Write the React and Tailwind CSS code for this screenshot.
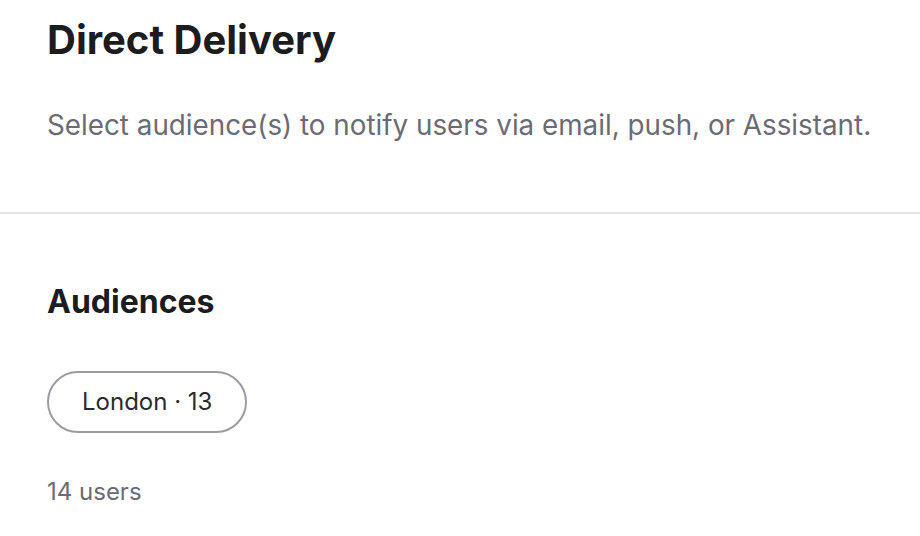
export default function App() {
  return (
    <div className="w-[920px] h-[536px] bg-white overflow-hidden" style={{ fontFamily: "Inter, 'Noto Sans', sans-serif" }}>
      <div className="pl-[47px] pt-[14px]">
        <h1 className="text-[40px] leading-[52px] font-bold text-[#1c1c1f]">Direct Delivery</h1>
        <p className="mt-[41px] whitespace-nowrap text-[27.8px] leading-[36px] text-[#6b6b74]">Select audience(s) to notify users via email, push, or Assistant.</p>
      </div>
      <div className="mt-[69px] h-[2px] bg-[#e4e4e7]" />
      <div className="px-[47px] pt-[68px]">
        <h2 className="text-[32px] leading-[40px] font-bold text-[#1c1c1f]">Audiences</h2>
        <div className="mt-[49px] flex">
          <div className="h-[62px] px-[33px] rounded-full border-2 border-[#9b9ba3] flex items-center text-[24px] text-[#2a2a2e]">London · 13</div>
        </div>
        <p className="mt-[43px] text-[24px] leading-[32px] text-[#6b6b74]">14 users</p>
      </div>
    </div>
  );
}
